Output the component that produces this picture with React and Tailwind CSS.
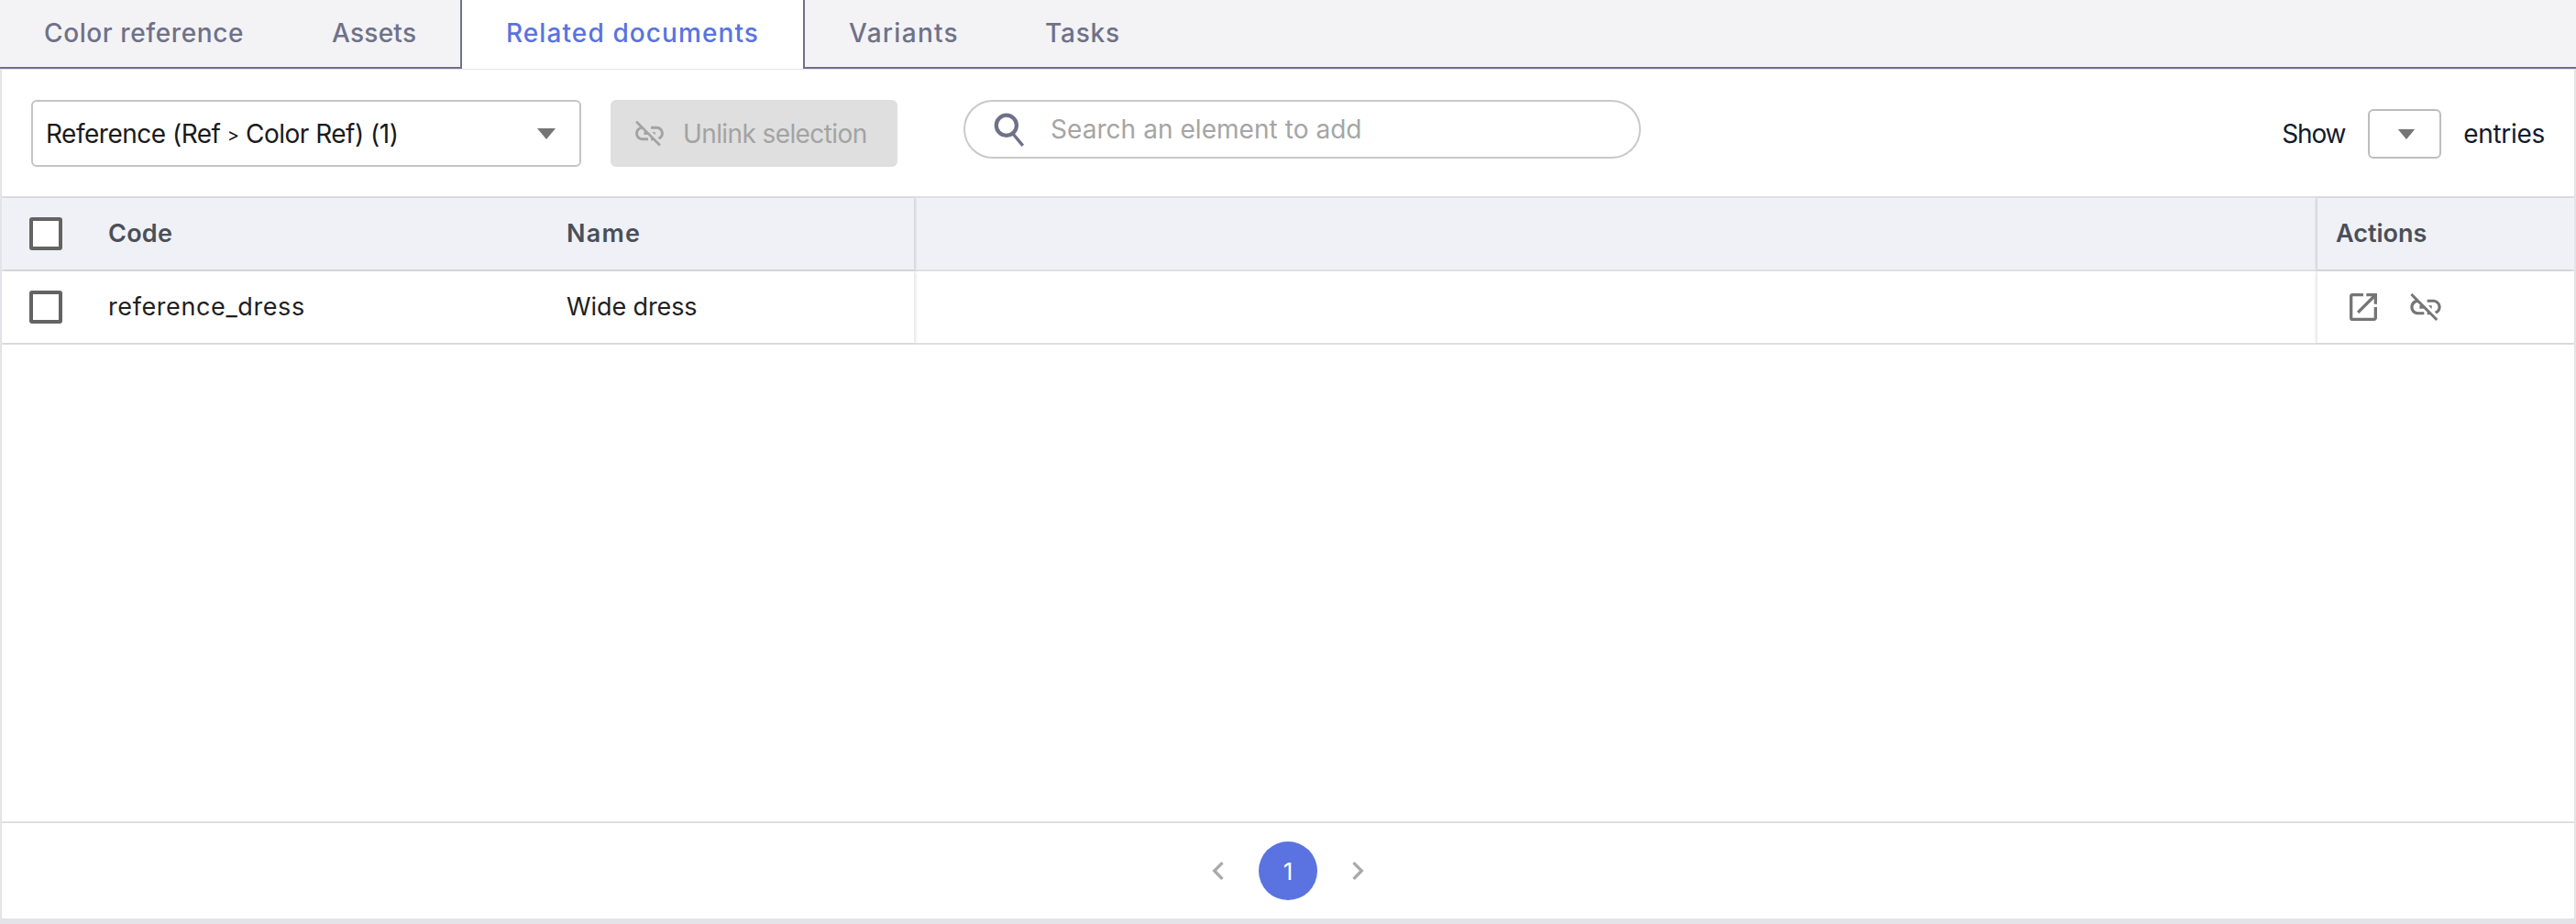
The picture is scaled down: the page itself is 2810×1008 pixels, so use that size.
import React from "react";
import { MdLinkOff, MdOpenInNew, MdChevronLeft, MdChevronRight } from "react-icons/md";

const Caret = ({ className }) => (
  <svg viewBox="0 0 20 12" className={className} fill="currentColor"><path d="M0 0h20L10 12z" /></svg>
);
const Check = () => <div className="w-[36px] h-[36px] rounded-[3px] border-[4px] border-[#636363] bg-white shrink-0" />;

const Tab = ({ children, active, className = "" }) =>
  active ? (
    <div className={`h-[75px] pb-[3px] flex items-center justify-center w-[376px] bg-white border-x-2 border-[#6f7189] text-[#5a73e0] text-[28px] font-medium tracking-[1.1px] ${className}`}>{children}</div>
  ) : (
    <div className={`h-[75px] pb-[1px] flex items-center text-[#6f7189] text-[28px] font-medium border-b-2 border-[#6f7189] ${className}`}>{children}</div>
  );

export default function App() {
  return (
    <div className="w-[2810px] h-[1008px] bg-[#e3e3e8] flex flex-col overflow-hidden font-['Inter','Liberation_Sans',sans-serif]">
      <div className="flex h-[75px] bg-[#f3f3f6] shrink-0">
        <Tab className="w-[502px] pl-[48px]">
          <span className="w-[314px] tracking-[0.6px]">Color reference</span>
          <span className="tracking-[0.25px]">Assets</span>
        </Tab>
        <Tab active>Related documents</Tab>
        <Tab className="flex-1 pl-[48px]">
          <span className="w-[214px] tracking-[1.3px]">Variants</span>
          <span className="tracking-[0.8px]">Tasks</span>
        </Tab>
      </div>

      <div className="flex-1 flex flex-col bg-white mx-[2px] mb-[6px] mt-[1px] min-h-0">
        <div className="h-[138px] flex items-start shrink-0">
          <div className="mt-[33px] ml-[32px] w-[600px] h-[73px] border-2 border-[#c4c4c4] rounded-[6px] flex items-center justify-between pl-[14px] pr-[26px]">
            <span className="text-[28px] text-[#1a1a1a] tracking-[-0.5px]">Reference (Ref <span className="text-[20px] align-[2px]">&gt;</span> Color Ref) (1)</span>
            <Caret className="w-[20px] h-[12px] text-[#757575]" />
          </div>
          <div className="mt-[33px] ml-[32px] w-[313px] h-[73px] bg-[#dfdfdf] rounded-[6px] flex items-center pl-[24px] gap-[18px] text-[#a3a3a3]">
            <MdLinkOff className="w-[37px] h-[37px]" />
            <span className="text-[28px] tracking-[-0.6px]">Unlink selection</span>
          </div>
          <div className="mt-[33px] ml-[72px] w-[739px] h-[64px] border-2 border-[#c9c9c9] rounded-full flex items-center pl-[29px] gap-[26px]">
            <svg viewBox="0 0 36 36" className="w-[38px] h-[38px] text-[#6f7189]" fill="none" stroke="currentColor">
              <circle cx="15" cy="14" r="10.5" strokeWidth="4" />
              <path d="M22 23l10 12" strokeWidth="3.2" />
            </svg>
            <span className="text-[28px] text-[#a5a5a5] tracking-[0.05px]">Search an element to add</span>
          </div>
          <div className="ml-auto mt-[43px] flex items-center mr-[32px]">
            <span className="text-[28px] text-[#131a2b] tracking-[-1.2px]">Show</span>
            <div className="ml-[25px] w-[80px] h-[54px] border-2 border-[#bdbdbd] rounded-[6px] flex items-center justify-center pl-[4px]">
              <Caret className="w-[20px] h-[11px] text-[#757575]" />
            </div>
            <span className="ml-[24px] text-[28px] text-[#131a2b] tracking-[-0.3px]">entries</span>
          </div>
        </div>

        <div className="h-[82px] shrink-0 flex bg-[#f0f1f6] border-y-2 border-[#e0e0e4] text-[#4a4f58] text-[27px] font-semibold">
          <div className="w-[995px] flex items-center pl-[30px] shadow-[2px_0_2px_rgba(0,0,0,0.12)]">
            <Check />
            <span className="ml-[50px] w-[500px] tracking-[0.25px]">Code</span>
            <span className="tracking-[1.2px]">Name</span>
          </div>
          <div className="flex-1" />
          <div className="w-[280px] flex items-center pl-[20px] shadow-[-2px_0_2px_rgba(0,0,0,0.12)]">Actions</div>
        </div>

        <div className="h-[80px] shrink-0 flex border-b-2 border-[#e0e0e4] text-[#1f1f1f] text-[27px]">
          <div className="w-[995px] flex items-center pl-[30px] shadow-[2px_0_3px_rgba(0,0,0,0.1)]">
            <Check />
            <span className="ml-[50px] w-[500px] tracking-[0.6px]">reference_dress</span>
            <span className="tracking-[-0.1px]">Wide dress</span>
          </div>
          <div className="flex-1" />
          <div className="w-[280px] flex items-center pl-[30px] gap-[28px] text-[#757575] shadow-[-2px_0_3px_rgba(0,0,0,0.1)]">
            <MdOpenInNew className="w-[40px] h-[40px]" />
            <MdLinkOff className="w-[40px] h-[40px]" />
          </div>
        </div>

        <div className="flex-1" />

        <div className="h-[106px] shrink-0 border-t-2 border-[#e0e0e0] flex items-center justify-center gap-[24px] text-[#a9a9a9]">
          <MdChevronLeft className="w-[40px] h-[40px]" />
          <div className="w-[64px] h-[64px] rounded-full bg-[#5a73e0] text-white flex items-center justify-center text-[26px]">1</div>
          <MdChevronRight className="w-[40px] h-[40px]" />
        </div>
      </div>
    </div>
  );
}
